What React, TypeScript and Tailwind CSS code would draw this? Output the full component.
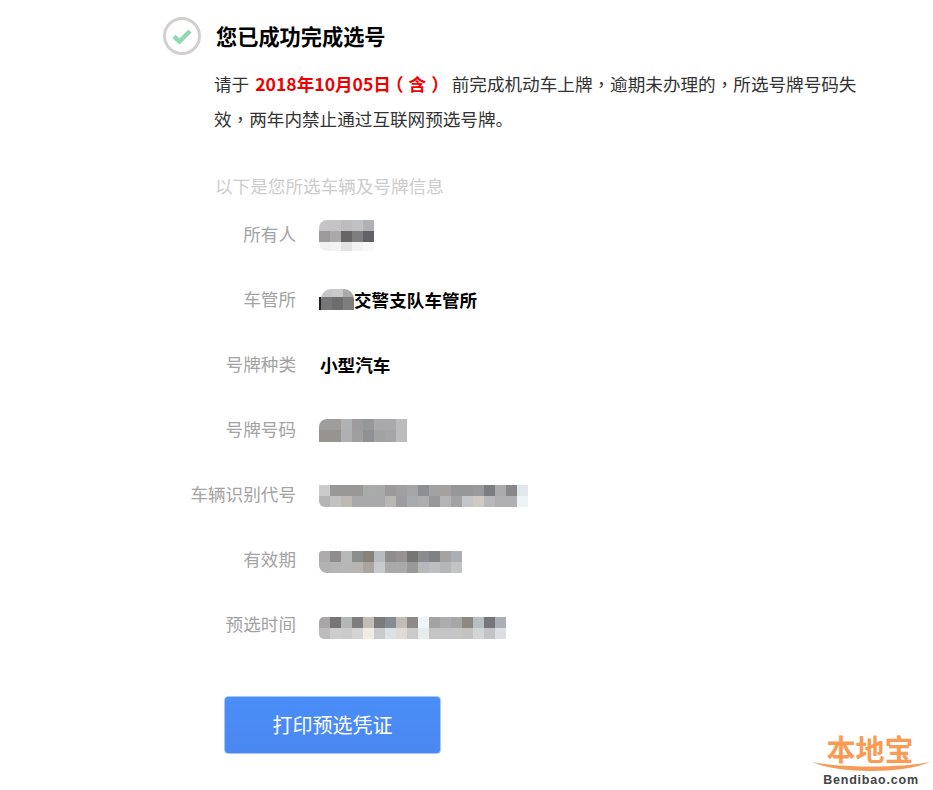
type Grid = string[][];
const cell = 11;

function Mosaic({ rows, rowH = [11, 11], rounded = "", cls = "", w = cell }: { rows: Grid; rowH?: number[]; rounded?: string; cls?: string; w?: number }) {
  return (
    <div className={`flex flex-col overflow-hidden shrink-0 ${rounded} ${cls}`}>
      {rows.map((r, i) => (
        <div key={i} className="flex">
          {r.map((c, j) => (
            <div key={j} style={{ backgroundColor: c, width: w, height: rowH[i] }} />
          ))}
        </div>
      ))}
    </div>
  );
}

const owner: Grid = [
  ["#c5c5c7", "#c4c4c6", "#bdbdbf", "#bfc0c2", "#afb2b4"],
  ["#9c9a9a", "#aaa9a9", "#676565", "#7f7e7e", "#5f6368"],
  ["#f0f0f0", "#f3f3f3", "#e2e2e2", "#f2f2f2", "#f8f8f8"],
];
const office: Grid = [
  ["#c5c5c7", "#c9c9cb", "#aaa9a9"],
  ["#777676", "#6e6d6d", "#7f7e7e"],
];
const plate: Grid = [
  ["#9f9d9b", "#9f9d9b", "#b1b1b3", "#9c9c9e", "#959799", "#a9a9ac", "#a9a9ac", "#bcbcbe"],
  ["#97938f", "#97938f", "#b0b0b2", "#9f9f9f", "#8f9294", "#a1a3a3", "#a5a5a7", "#bcbcbe"],
];
const vin: Grid = [
  ["#cbcbcb", "#9a9897", "#9a9897", "#9a9897", "#a9abab", "#a8aaaa", "#9d9a9b", "#a0a0a2", "#a5a5a7", "#8e8f92", "#a2a2a3", "#a5a19e", "#97979a", "#97979a", "#9a9a9c", "#7c7d80", "#aaaaac", "#88888b", "#e2e7ec"],
  ["#b5b5b5", "#c2c2c0", "#bdb9b5", "#a9a9ab", "#a9a9ab", "#a9a9ab", "#b9b7b3", "#9d9d9f", "#a7abae", "#adadb0", "#98989a", "#b4b4b4", "#a3a3a5", "#c4c6ca", "#cfcac3", "#b8b8ba", "#b0b0b2", "#b0b0b2", "#f0f3f6"],
];
const valid: Grid = [
  ["#aeabac", "#8f8c8c", "#b7b9b9", "#8b8d8d", "#86817b", "#b8bcc0", "#8f8d8d", "#979291", "#767674", "#8b8c90", "#808185", "#a5a3a1", "#abaeb2"],
  ["#b2b2b2", "#b4b4b4", "#b6b6b6", "#b7b5b3", "#aaa69f", "#c8cacd", "#a9a9a9", "#abaaaa", "#999996", "#b6b8bb", "#bdbec0", "#b5b6b8", "#c1c3c5"],
];
const time: Grid = [
  ["#a9a6a6", "#777576", "#b2b6b6", "#7e7e7e", "#c4bdb6", "#7b7b7c", "#858c94", "#c2bcb6", "#8e8a8a", "#eef6f9", "#a3a3a3", "#adadad", "#a7a7a7", "#8e8a82", "#b8bec2", "#76767a", "#aab0b6"],
  ["#bcbcbc", "#cdcdcd", "#cacbcb", "#d4d4d4", "#f0ece6", "#cacaca", "#dde0e4", "#dfdcd7", "#cbcaca", "#e9ecec", "#c4c4c4", "#c4c4c4", "#c5c5c5", "#c2c2c0", "#d2d4d6", "#c3c3c5", "#dcdfe2"],
];

function Row({ label, children }: { label: string; children: React.ReactNode }) {
  return (
    <div className="flex items-center h-[65px]">
      <div className="w-[133px] text-right text-[17.6px] leading-[30px] text-[#a3a3a3] shrink-0 pb-[3px]">{label}</div>
      <div className="ml-[23px] flex items-center">{children}</div>
    </div>
  );
}

const Comma = () => <span style={{ fontFamily: '"Noto Sans CJK TC", sans-serif' }}>，</span>;

export default function App() {
  return (
    <div
      className="relative w-[933px] h-[790px] overflow-hidden bg-white pt-[17px] pl-[163px]"
      style={{ fontFamily: '"Noto Sans CJK SC", "Liberation Sans", sans-serif' }}
    >
      <div className="flex items-center h-[38px]">
        <div className="w-[38px] h-[38px] rounded-full border-[3px] border-[#d3cfcf] flex items-center justify-center">
          <svg width="22" height="18" viewBox="0 0 22 18">
            <path d="M3 9.5 L8.5 14.5 L19 4" fill="none" stroke="#8fd8b2" strokeWidth="4.5" />
          </svg>
        </div>
        <h1 className="ml-[15px] text-[21.2px] font-bold text-black leading-[38px]">您已成功完成选号</h1>
      </div>

      <p className="ml-[51px] mt-[11px] w-[650px] text-[17.6px] leading-[35.2px] text-[#333333]">
        请于 <span className="font-bold text-[#f00000] ml-[2px] mr-[4px]">2018年10月05日<span className="inline-block -translate-x-[5px]">（</span>含<span className="inline-block translate-x-[5px]">）</span></span> 前完成机动车上牌<Comma />逾期未办理的<Comma />所选号牌号码失效<Comma />两年内禁止通过互联网预选号牌。
      </p>

      <p className="ml-[52px] mt-[32px] text-[17.6px] leading-[36px] text-[#cccccc]">以下是您所选车辆及号牌信息</p>

      <div className="-mt-[1px]">
        <Row label="所有人">
          <Mosaic rows={owner} rowH={[11, 11, 9]} rounded="rounded-l-[8px]" />
        </Row>
        <Row label="车管所">
          <div className="flex items-center -mt-[2px]">
            <div className="w-[2px] h-[13px] bg-[#222222] self-end" />
            <Mosaic rows={office} rowH={[8, 13]} w={11} rounded="rounded-t-[10px]" />
            <span className="text-[17.6px] font-bold text-black leading-[21px]">交警支队车管所</span>
          </div>
        </Row>
        <Row label="号牌种类">
          <span className="text-[17.6px] font-bold text-black ml-[1px] pb-[2px]">小型汽车</span>
        </Row>
        <Row label="号牌号码">
          <Mosaic rows={plate} rowH={[11, 12]} rounded="rounded-tl-[8px]" />
        </Row>
        <Row label="车辆识别代号">
          <Mosaic rows={vin} rounded="rounded-bl-[6px]" />
        </Row>
        <Row label="有效期">
          <Mosaic rows={valid} rounded="rounded-bl-[8px] rounded-tl-[3px]" cls="mt-[2px]" />
        </Row>
        <Row label="预选时间">
          <Mosaic rows={time} rounded="rounded-l-[5px]" cls="mt-[4px]" />
        </Row>
      </div>

      <button className="ml-[61px] mt-[38px] w-[217px] h-[58px] rounded-[4px] border border-[#a9c6f5] bg-gradient-to-b from-[#4a8ef9] to-[#4a87f0] text-white text-[20px] flex items-center justify-center">
        打印预选凭证
      </button>

      <div className="absolute left-[811px] top-[732px] w-[120px] flex flex-col items-center">
        <div className="text-[29px] font-bold leading-[33px] text-[#f99b55] -translate-x-[1px]">本地宝</div>
        <svg width="120" height="11" viewBox="0 0 120 11" className="-mt-[4px]">
          <path d="M1 1 C30 7 90 7 119 1 C92 13 28 13 1 1Z" fill="#f79a55" />
        </svg>
        <div className="mt-[1px] text-[12.5px] font-bold leading-[14px] text-[#444444] tracking-[0.8px]" style={{ fontFamily: '"Liberation Sans", sans-serif' }}>
          Bendibao.com
        </div>
      </div>
    </div>
  );
}
